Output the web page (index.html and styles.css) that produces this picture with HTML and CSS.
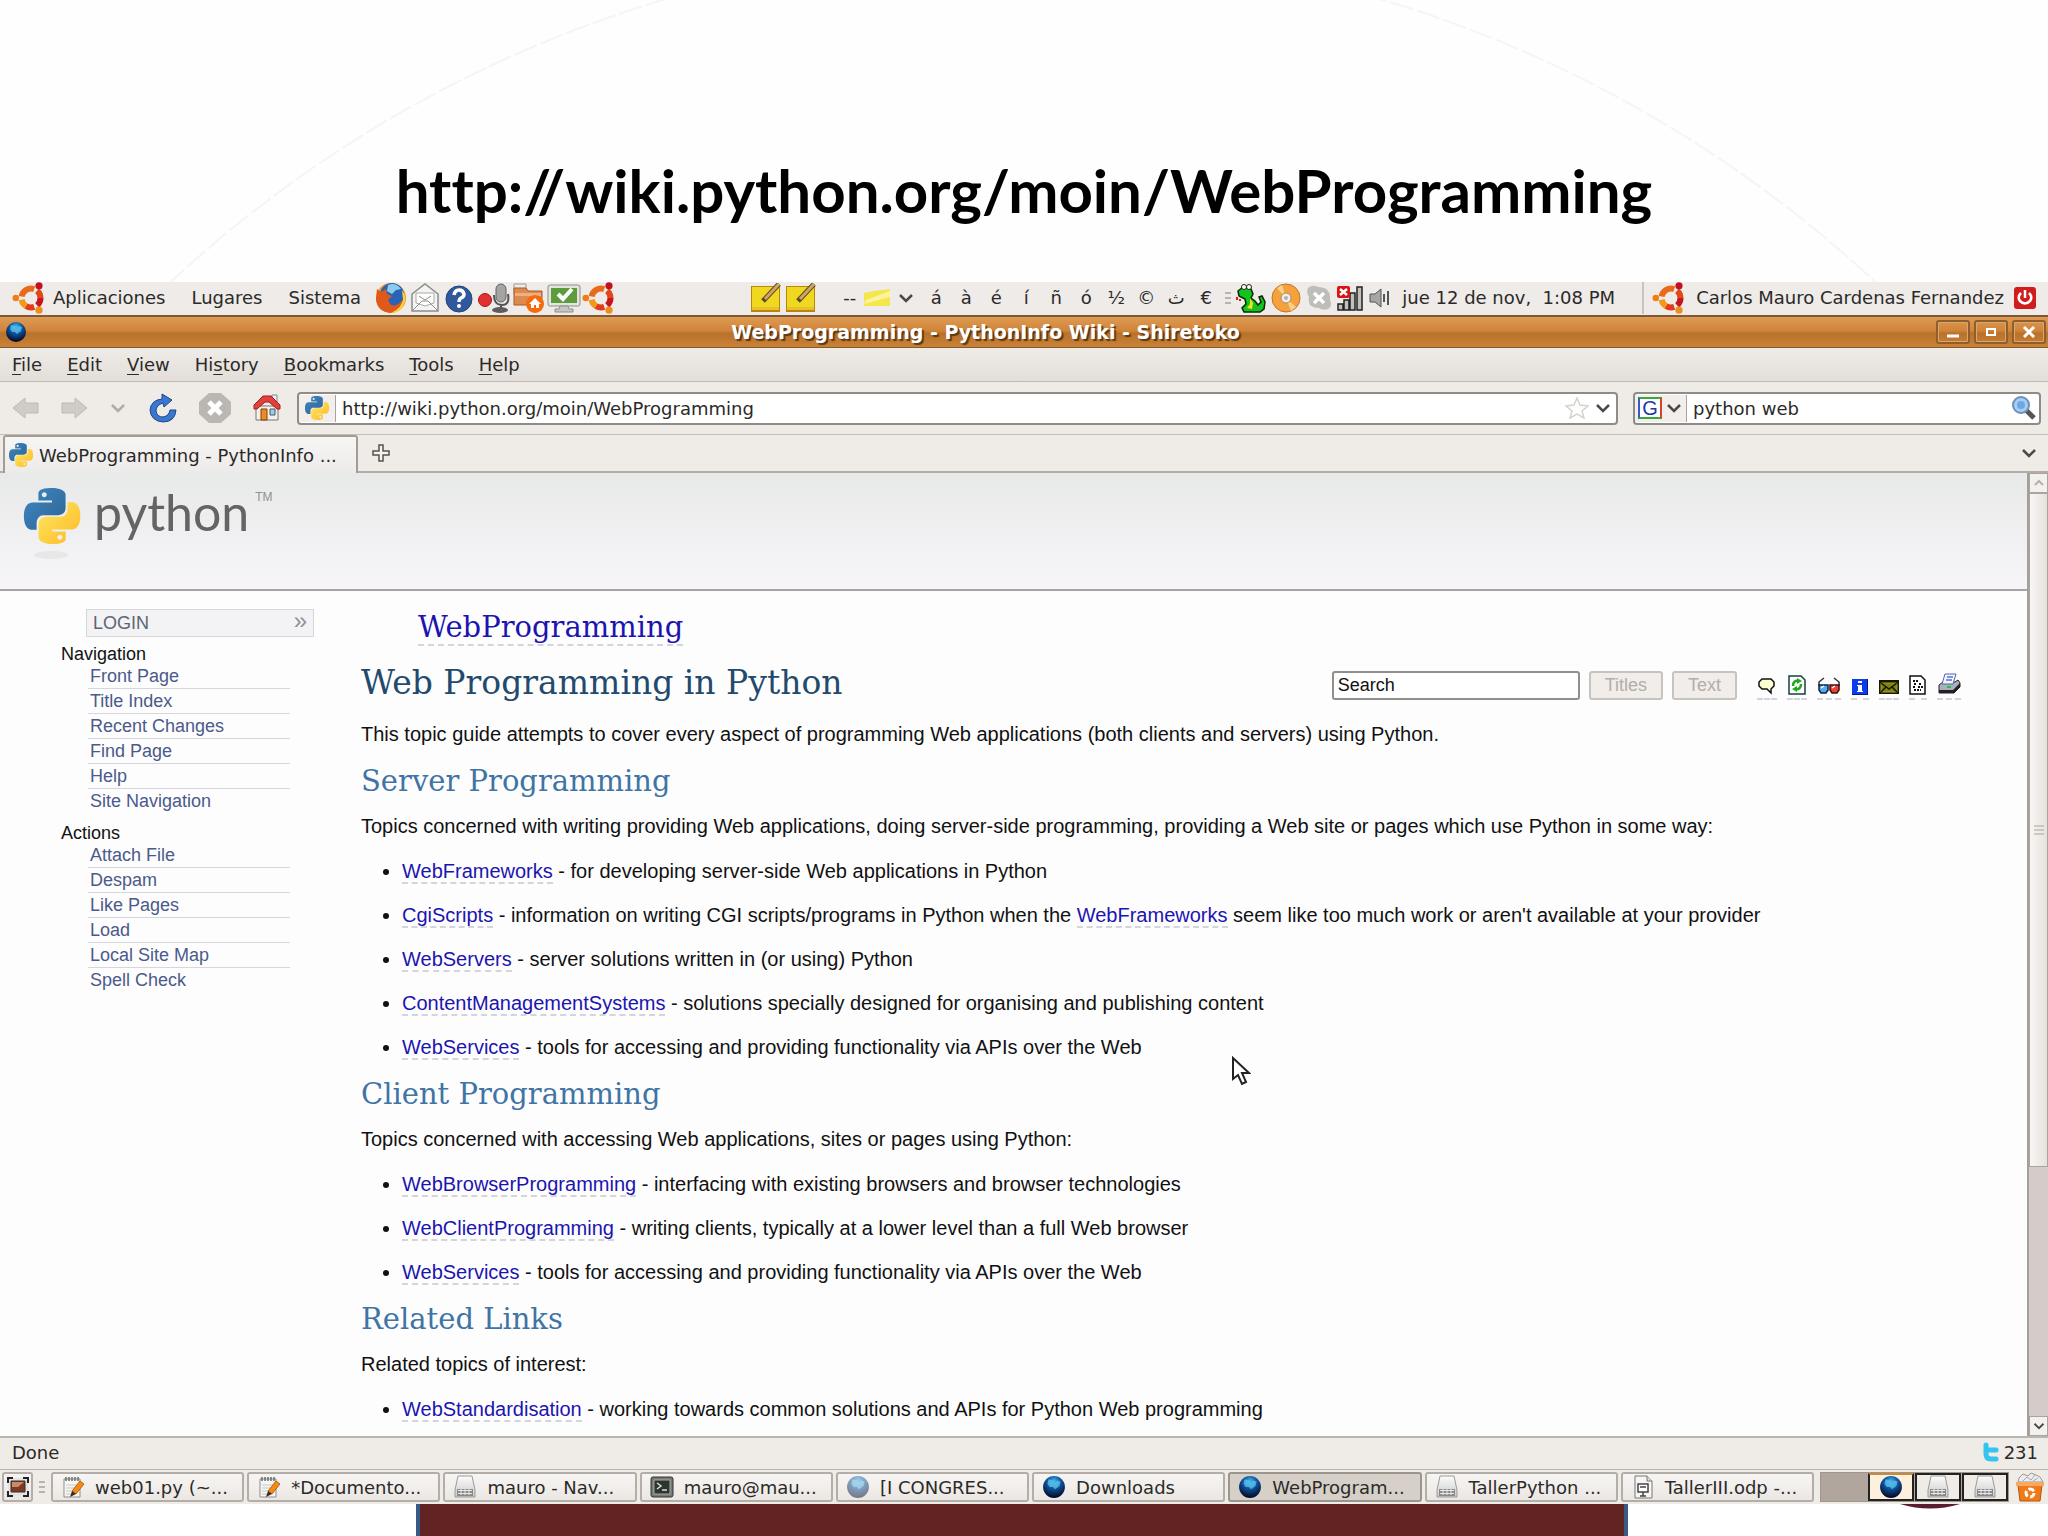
FILE: index.html
```html
<!DOCTYPE html>
<html lang="es">
<head>
    <meta charset="UTF-8">
    <meta name="viewport" content="width=device-width, initial-scale=1.0">
    <title>WebProgramming</title>
    <link rel="stylesheet" href="styles.css">
</head>
<body>
    <!-- shared icons -->
    <svg class="sprite" width="0" height="0" aria-hidden="true">
        <defs>
            <linearGradient id="py-blue" x1="0" y1="0" x2="1" y2="1"><stop offset="0" stop-color="#3e88c4"/><stop offset="1" stop-color="#2f6391"/></linearGradient>
            <linearGradient id="py-yellow" x1="0" y1="0" x2="1" y2="1"><stop offset="0" stop-color="#ffe95f"/><stop offset="1" stop-color="#fdb827"/></linearGradient>
            <radialGradient id="globe-fill" cx=".5" cy=".25" r=".75"><stop offset="0" stop-color="#4fc0ee"/><stop offset=".35" stop-color="#1260ac"/><stop offset="1" stop-color="#020624"/></radialGradient>
            <linearGradient id="drive-fill" x1="0" y1="0" x2="0" y2="1"><stop offset="0" stop-color="#fdfdfd"/><stop offset="1" stop-color="#c9c9c9"/></linearGradient>
            <symbol id="python" viewBox="0 0 24 24">
                <path fill="url(#py-blue)" d="M14.25.18l.9.2.73.26.59.3.45.32.34.34.25.34.16.33.1.3.04.26.02.2-.01.13V8.5l-.05.63-.13.55-.21.46-.26.38-.3.31-.33.25-.35.19-.35.14-.33.1-.3.07-.26.04-.21.02H8.77l-.69.05-.59.14-.5.22-.41.27-.33.32-.27.35-.2.36-.15.37-.1.35-.07.32-.04.27-.02.21v3.06H3.17l-.21-.03-.28-.07-.32-.12-.35-.18-.36-.26-.36-.36-.35-.46-.32-.59-.28-.73-.21-.88-.14-1.05-.05-1.23.06-1.22.16-1.04.24-.87.32-.71.36-.57.4-.44.42-.33.42-.24.4-.16.36-.1.32-.05.24-.01h.16l.06.01h8.16v-.83H6.18l-.01-2.75-.02-.37.05-.34.11-.31.17-.28.25-.26.31-.23.38-.2.44-.18.51-.15.58-.12.64-.1.71-.06.77-.04.84-.02 1.27.05zm-6.3 1.98l-.23.33-.08.41.08.41.23.34.33.22.41.09.41-.09.33-.22.23-.34.08-.41-.08-.41-.23-.33-.33-.22-.41-.09-.41.09z"/>
                <path fill="url(#py-yellow)" d="M21.1 6.11l.28.06.32.12.35.18.36.27.36.35.35.47.32.59.28.73.21.88.14 1.04.05 1.23-.06 1.23-.16 1.04-.24.86-.32.71-.36.57-.4.45-.42.33-.42.24-.4.16-.36.09-.32.05-.24.02-.16-.01h-8.22v.82h5.84l.01 2.76.02.36-.05.34-.11.31-.17.29-.25.25-.31.24-.38.2-.44.17-.51.15-.58.13-.64.09-.71.07-.77.04-.84.01-1.27-.04-1.07-.14-.9-.2-.73-.25-.59-.3-.45-.33-.34-.34-.25-.34-.16-.33-.1-.3-.04-.25-.02-.2.01-.13v-5.34l.05-.64.13-.54.21-.46.26-.38.3-.32.33-.24.35-.2.35-.14.33-.1.3-.06.26-.04.21-.02.13-.01h5.84l.69-.05.59-.14.5-.21.41-.28.33-.32.27-.35.2-.36.15-.36.1-.35.07-.32.04-.28.02-.21V6.07h2.09l.14.01zm-6.47 14.25l-.23.33-.08.41.08.41.23.33.33.23.41.08.41-.08.33-.23.23-.33.08-.41-.08-.41-.23-.33-.33-.23-.41-.08-.41.08z"/>
            </symbol>
            <symbol id="ubuntu" viewBox="0 0 34 32">
                <g fill="none" stroke-width="6">
                    <path stroke="#ea6a1c" d="M9.600 14.400A9.500 9.500 0 0 1 22.200 7.100"/>
                    <path stroke="#e0481c" d="M25.100 8.700A9.500 9.500 0 0 1 28.500 16"/>
                    <path stroke="#c8141c" d="M28.500 16A9.500 9.500 0 0 1 25.100 23.300"/>
                    <path stroke="#e03c1c" d="M22.200 24.900A9.500 9.500 0 0 1 14 24"/>
                    <path stroke="#f3981a" d="M14 24A9.500 9.500 0 0 1 9.600 17.600"/>
                </g>
                <circle cx="3.800" cy="16" r="3.300" fill="#ee7d1a"/>
                <circle cx="27" cy="3.800" r="3.600" fill="#c4101e"/>
                <circle cx="27" cy="28.200" r="3.600" fill="#f08c1c"/>
            </symbol>
            <symbol id="globe" viewBox="0 0 22 22">
                <circle cx="11" cy="11" r="10" fill="url(#globe-fill)"/>
                <path fill="#5cc4ee" opacity=".75" d="M6 4l4 1 1 3 3-3 3 1-1 4-4 3-2-2-3 0-2-3z"/>
            </symbol>
            <symbol id="chevron" viewBox="0 0 16 16"><path fill="none" stroke="#4c4a46" stroke-width="2.500" d="M2 5l6 6 6-6"/></symbol>
            <symbol id="drive" viewBox="0 0 24 24">
                <path fill="url(#drive-fill)" stroke="#9b9b9b" d="M5 1h14l3 14v7H2v-7z"/>
                <path fill="#8a8a8a" d="M4 14h16v7H4z"/>
                <path stroke="#e8e8e8" d="M5 15.500h14M5 18.500h14M8 14v6M12 14v6M16 14v6"/>
            </symbol>
            <symbol id="notepad" viewBox="0 0 24 24">
                <path fill="#f6f6f4" stroke="#8d8d88" d="M3 4h16v18H3z"/>
                <path stroke="#6d6d68" stroke-width="1.500" d="M5 2v4M8 2v4M11 2v4M14 2v4M17 2v4"/>
                <path stroke="#c6c6c2" d="M5 10h11M5 13h9M5 16h6M5 19h5"/>
                <path fill="#f58a12" stroke="#a85206" stroke-width=".8" d="M19 6l4 3-8 10-4-3z"/>
                <path fill="#3c2a1a" d="M11 16l4 3-6 3z"/>
            </symbol>
            <symbol id="sticky" viewBox="0 0 31 30">
                <path fill="#b8860b" d="M1 3h29v26H1z"/>
                <path fill="#f0d820" d="M2 4h27v20H2z"/>
                <path fill="#e8c02c" d="M2 24h27v3H2z"/>
                <path fill="none" stroke="#5a4a20" stroke-width="5" d="M13 18L29 1"/>
                <path fill="none" stroke="#d0a468" stroke-width="3" d="M15 16L29 1"/>
            </symbol>
        </defs>
    </svg>

    <header class="slide-header">
        <svg class="slide-arc" viewBox="0 0 2048 282" aria-hidden="true">
            <circle cx="1023" cy="1199" r="1252" fill="none" stroke="#f6f4f4" stroke-width="2" stroke-dasharray="24 4"/>
        </svg>
        <h1>http://wiki.python.org/moin/WebProgramming</h1>
    </header>

    <div class="desktop">
        <div class="panel">
            <div class="panel-menu">
                <button type="button"><svg width="34" height="32"><use href="#ubuntu"/></svg>Aplicaciones</button>
                <button type="button">Lugares</button>
                <button type="button">Sistema</button>
            </div>
            <div class="launchers">
                <svg width="34" height="32" viewBox="0 0 34 32">
                    <circle cx="17" cy="16" r="15" fill="#f39a1c"/>
                    <circle cx="18" cy="13" r="12" fill="#2a63b4"/>
                    <path fill="#8ccbf0" d="M14 3q8-3 13 4l-5 1-4 4-5-3z"/>
                    <path fill="#e0581a" d="M3 7l4 3 5-3 1 5 5 2-4 4 3 5q7 2 11-5-2 12-11 13Q3 30 2 17z"/>
                    <path fill="#fbd33c" d="M28 8q6 8 1 16-4 7-12 7 11-5 12-13z"/>
                </svg>
                <svg width="32" height="32" viewBox="0 0 30 32">
                    <path fill="#f4f4f3" stroke="#8c8c8a" stroke-width="1.500" d="M2 12L15 2l13 10v17H2z"/>
                    <path fill="#fff" stroke="#a8a8a6" d="M6 11h18v10l-9 3-9-3z"/>
                    <path fill="none" stroke="#8c8c8a" d="M3 28l9-9h6l9 9M9 14l6 4 6-4"/>
                </svg>
                <svg width="34" height="32" viewBox="0 0 34 32">
                    <circle cx="17" cy="17" r="13" fill="#30589c" stroke="#24427c"/>
                    <path fill="none" stroke="#fff" stroke-width="3.500" d="M12 13q1-5 5-5t5 4q0 3-3 4-2 1-2 4"/>
                    <circle cx="17" cy="24" r="2" fill="#fff"/>
                </svg>
                <svg width="34" height="32" viewBox="0 0 34 32">
                    <circle cx="8" cy="18" r="6.500" fill="#e03030" stroke="#a81818"/>
                    <rect x="19" y="2" width="10" height="18" rx="5" fill="#a4a4a4" stroke="#636363"/>
                    <path fill="none" stroke="#555" stroke-width="2" d="M17 13q0 10 8 10t6-11M24 22v6"/>
                    <ellipse cx="23" cy="28" rx="8" ry="3" fill="#5d5d5d"/>
                </svg>
                <svg width="34" height="32" viewBox="0 0 34 32">
                    <path fill="#ececea" stroke="#999" d="M2 2h12v10H2z"/>
                    <path fill="#dd8a50" stroke="#a85a28" d="M2 6h12l2 3h14v14H2z"/>
                    <path fill="#eeb080" d="M3 11h26v3H3z"/>
                    <circle cx="23" cy="22" r="9" fill="#f56a0c"/>
                    <path fill="#fff" d="M23 16l6 6h-2v4h-3v-3h-2v3h-3v-4h-2z"/>
                </svg>
                <svg width="34" height="32" viewBox="0 0 34 32">
                    <rect x="1" y="3" width="32" height="21" rx="2" fill="#e4e4e0" stroke="#8f8f8a"/>
                    <path fill="#5c9c3c" d="M4 6h26v15H4z"/>
                    <path fill="none" stroke="#fff" stroke-width="4" d="M11 12l5 5 9-10"/>
                    <path fill="#c6c6c2" stroke="#8f8f8a" d="M13 24h8l1 3h4v3H8v-3h4z"/>
                </svg>
                <svg width="34" height="32"><use href="#ubuntu"/></svg>
            </div>

            <div class="applets">
                <svg width="31" height="30"><use href="#sticky"/></svg>
                <svg width="31" height="30"><use href="#sticky"/></svg>
            </div>
            <div class="charmap">
                <span>--</span>
                <svg width="28" height="20" viewBox="0 0 28 20"><path fill="#f5e64a" d="M1 5l10-2L27 1v17H1z"/><path fill="#fbf3a0" d="M3 12L27 3v6L1 16z"/></svg>
                <svg width="16" height="16"><use href="#chevron"/></svg>
                <div class="chars">
                    <button type="button">á</button><button type="button">à</button><button type="button">é</button><button type="button">í</button><button type="button">ñ</button><button type="button">ó</button><button type="button">½</button><button type="button">©</button><button type="button">ث</button><button type="button">€</button>
                </div>
            </div>
            <div class="tray">
                <svg width="6" height="14" viewBox="0 0 6 14"><path stroke="#b9b3aa" stroke-width="2" d="M0 2h6M0 7h6M0 12h6"/></svg>
                <svg width="30" height="30" viewBox="0 0 30 30">
                    <path fill="#12c41c" stroke="#042c08" stroke-width="1.500" d="M2 8l5-4 8 2 2 5-2 4 4 3 3 4 3-3-2-5 3-1 3 6-1 7-4 3H8l-2-4 4-4-1-5-6-3z"/>
                    <path fill="#f4e21c" d="M14 15l3 5-1 6-5-1 3-4z"/>
                    <circle cx="8" cy="4" r="2.500" fill="#fff" stroke="#222"/><circle cx="13" cy="4" r="2.500" fill="#fff" stroke="#222"/>
                    <path stroke="#e01818" stroke-width="2" d="M1 14v3M4 16v2"/>
                </svg>
                <svg width="30" height="30" viewBox="0 0 30 30">
                    <circle cx="15" cy="15" r="14" fill="#f5a13c" stroke="#c0742c"/>
                    <path fill="#fbd08c" d="M15 15L6 5l5-3zM15 15l10 9-5 4z"/>
                    <circle cx="15" cy="15" r="5" fill="#eee" stroke="#b0885c"/><circle cx="15" cy="15" r="2" fill="#b8b0a4"/>
                </svg>
                <svg width="26" height="26" viewBox="0 0 26 26">
                    <path fill="#bdbdb9" d="M2 3q5-4 10-1 13 0 12 13 3 6-2 9-5 2-9-1Q1 23 3 12 0 7 2 3z"/>
                    <path stroke="#fff" stroke-width="3.500" d="M8 8l10 10M18 8L8 18"/>
                </svg>
                <svg width="26" height="28" viewBox="0 0 26 28">
                    <path fill="#c0c0bc" stroke="#222" stroke-width="1.500" d="M1 20h5v6H1zM7 16h5v10H7zM13 9h5v17h-5zM20 3h5v23h-5z"/>
                    <rect x="0" y="2" width="13" height="12" rx="2" fill="#d81414"/>
                    <path stroke="#fff" stroke-width="2.500" d="M3 5l7 6M10 5l-7 6"/>
                </svg>
                <svg width="24" height="22" viewBox="0 0 24 22">
                    <path fill="#a6a6a4" stroke="#555" d="M2 7h5l6-5v18l-6-5H2z"/>
                    <path fill="none" stroke="#555" stroke-width="2" d="M16 7v8M20 4v14"/>
                </svg>
            </div>
            <time class="clock">jue 12 de nov,&nbsp; 1:08 PM</time>
            <div class="user">
                <svg width="34" height="32"><use href="#ubuntu"/></svg>
                <span>Carlos Mauro Cardenas Fernandez</span>
                <svg width="22" height="22" viewBox="0 0 22 22">
                    <rect width="22" height="22" rx="3" fill="#d01c1c"/>
                    <path fill="none" stroke="#fff" stroke-width="2.500" d="M7 6q-4 4-1 8 5 5 10 0 3-4-1-8M11 3v8"/>
                </svg>
            </div>
        </div>

        <div class="titlebar">
            <svg width="22" height="22"><use href="#globe"/></svg>
            <span class="window-title">WebProgramming - PythonInfo Wiki - Shiretoko</span>
            <div class="window-buttons">
                <button type="button" aria-label="Minimize"><svg width="18" height="16" viewBox="0 0 18 16"><path stroke="#fff" stroke-width="3" d="M3 12h12"/></svg></button>
                <button type="button" aria-label="Maximize"><svg width="18" height="16" viewBox="0 0 18 16"><path fill="none" stroke="#fff" stroke-width="2" d="M5 5h8v6H5z"/></svg></button>
                <button type="button" aria-label="Close"><svg width="18" height="16" viewBox="0 0 18 16"><path stroke="#fff" stroke-width="3" d="M4 3l10 10M14 3L4 13"/></svg></button>
            </div>
        </div>

        <nav class="menubar">
            <button type="button"><u>F</u>ile</button>
            <button type="button"><u>E</u>dit</button>
            <button type="button"><u>V</u>iew</button>
            <button type="button">Hi<u>s</u>tory</button>
            <button type="button"><u>B</u>ookmarks</button>
            <button type="button"><u>T</u>ools</button>
            <button type="button"><u>H</u>elp</button>
        </nav>

        <div class="toolbar">
            <div class="nav-buttons">
                <button type="button" aria-label="Back" disabled><svg width="28" height="24" viewBox="0 0 28 24"><path fill="#cfcbc6" stroke="#bfbab4" d="M1 12L13 2v5h13v10H13v5z"/></svg></button>
                <button type="button" aria-label="Forward" disabled><svg width="28" height="24" viewBox="0 0 28 24"><path fill="#cfcbc6" stroke="#bfbab4" d="M27 12L15 2v5H2v10h13v5z"/></svg></button>
                <button type="button" class="history" aria-label="Recent pages" disabled><svg width="16" height="16" viewBox="0 0 16 16"><path fill="none" stroke="#b0aca6" stroke-width="2.500" d="M2 5l6 6 6-6"/></svg></button>
                <button type="button" aria-label="Reload"><svg width="30" height="30" viewBox="0 0 30 30"><path fill="#3a78d0" stroke="#1c4688" d="M14 1l10 6-8 7-1-4q-7 2-7 8 1 6 7 6 6-1 7-7h6q-1 12-13 12Q3 28 2 17 3 7 14 6z"/></svg></button>
                <button type="button" aria-label="Stop" disabled><svg width="34" height="32" viewBox="0 0 34 32"><path fill="#bab7b3" d="M11 1h12l10 9v12l-10 9H11L1 22V10z"/><path stroke="#fff" stroke-width="5" d="M11 10l12 12M23 10L11 22"/></svg></button>
                <button type="button" aria-label="Home"><svg width="30" height="28" viewBox="0 0 30 28"><path fill="#f4f0ea" stroke="#777" d="M4 12h22v14H4z"/><path fill="#eee" stroke="#888" d="M20 1h5v8h-5z"/><path fill="#e2403c" stroke="#a01c1c" d="M11 2h8l9 9v4h-3l-8-7h-4l-8 7H2v-4z"/><path fill="#ee8a24" stroke="#804008" d="M9 15h6v11H9z"/><path fill="#8cd4f0" stroke="#555" d="M18 15h5v6h-5z"/></svg></button>
            </div>
            <div class="urlbar">
                <span class="site-icon"><svg width="24" height="24"><use href="#python"/></svg></span>
                <input type="text" aria-label="Location" value="http://wiki.python.org/moin/WebProgramming">
                <svg width="24" height="22" viewBox="0 0 24 22"><path fill="#fff" stroke="#d6d3cf" stroke-width="1.500" d="M12 1l3 7 8 1-6 5 2 7-7-4-7 4 2-7-6-5 8-1z"/></svg>
                <svg width="16" height="16"><use href="#chevron"/></svg>
            </div>
            <div class="searchbar">
                <button type="button" class="engine" aria-label="Search engine">
                    <span class="engine-logo">G</span>
                    <svg width="16" height="16"><use href="#chevron"/></svg>
                </button>
                <input type="text" aria-label="Web search" value="python web">
                <svg width="24" height="24" viewBox="0 0 24 24"><path stroke="#555" stroke-width="5" d="M14 14l8 8"/><circle cx="9" cy="9" r="8" fill="#a9cdf2" stroke="#6d8fb8" stroke-width="2"/><circle cx="9" cy="9" r="4" fill="#6ea6e6"/></svg>
            </div>
        </div>

        <div class="tabbar">
            <div class="tab"><svg width="24" height="24"><use href="#python"/></svg>WebProgramming - PythonInfo ...</div>
            <button type="button" aria-label="New tab"><svg width="18" height="18" viewBox="0 0 18 18"><path fill="#f6f4f1" stroke="#55524e" stroke-width="1.500" d="M7 1h4v6h6v4h-6v6H7v-6H1V7h6z"/></svg></button>
            <button type="button" class="all-tabs" aria-label="All tabs"><svg width="16" height="16"><use href="#chevron"/></svg></button>
        </div>

        <div class="viewport">
            <div class="page">
                <div class="site-header">
                    <svg width="58" height="80" viewBox="0 0 58 80">
                        <ellipse cx="28" cy="67" rx="17" ry="4" fill="#e2e2e3" opacity=".7"/>
                        <use href="#python" width="58" height="56"/>
                    </svg>
                    <span class="site-name">python</span><span class="tm">TM</span>
                </div>
                <div class="page-body">
                    <aside class="sidebar">
                        <a class="login" href="#">LOGIN <span>»</span></a>
                        <h4>Navigation</h4>
                        <ul>
                            <li><a href="#">Front Page</a></li>
                            <li><a href="#">Title Index</a></li>
                            <li><a href="#">Recent Changes</a></li>
                            <li><a href="#">Find Page</a></li>
                            <li><a href="#">Help</a></li>
                            <li><a href="#">Site Navigation</a></li>
                        </ul>
                        <h4>Actions</h4>
                        <ul>
                            <li><a href="#">Attach File</a></li>
                            <li><a href="#">Despam</a></li>
                            <li><a href="#">Like Pages</a></li>
                            <li><a href="#">Load</a></li>
                            <li><a href="#">Local Site Map</a></li>
                            <li><a href="#">Spell Check</a></li>
                        </ul>
                    </aside>

                    <main class="content">
                        <div class="page-title"><a href="#">WebProgramming</a></div>
                        <div class="heading-row">
                            <h2>Web Programming in Python</h2>
                            <form class="wiki-search">
                                <input type="text" aria-label="Search" value="Search">
                                <button type="submit" disabled>Titles</button>
                                <button type="submit" disabled>Text</button>
                            </form>
                            <div class="page-icons">
                                <a href="#" aria-label="Discussion"><svg width="20" height="20" viewBox="0 0 20 20"><path fill="#fdfdd0" stroke="#111" stroke-width="1.500" d="M5 4h9l3 3v4l-3 3v4l-4-4H5l-3-3V7z"/></svg></a>
                                <a href="#" aria-label="Refresh"><svg width="20" height="20" viewBox="0 0 20 20"><path fill="#fff" stroke="#134040" stroke-width="1.500" d="M2 1h12l4 4v14H2z"/><path fill="none" stroke="#1fa81f" stroke-width="2.500" d="M6 11q0-6 6-5M14 9q0 6-6 5"/><path fill="#1fa81f" d="M10 3l5 3-5 3zM10 11v6l-5-3z"/></svg></a>
                                <a href="#" aria-label="Diffs"><svg width="24" height="20" viewBox="0 0 24 20"><path fill="none" stroke="#333" stroke-width="1.500" d="M2 11V7l5-4M22 11V7l-5-4"/><path fill="#58a8f8" stroke="#123" stroke-width="1.500" d="M2 10h9v5l-2 3H4l-2-3z"/><path fill="#f04038" stroke="#311" stroke-width="1.500" d="M13 10h9v5l-2 3h-5l-2-3z"/><path stroke="#fff" stroke-width="1.500" d="M4 13l3-2M15 13l3-2"/></svg></a>
                                <a href="#" aria-label="Info"><svg width="18" height="20" viewBox="0 0 18 20"><path fill="#0c3cf0" d="M1 4h15v15H1z"/><path fill="#001a80" d="M16 4h1v16H1v-1h15z"/><path fill="#fff" d="M7 6h4v2H7zM6 10h5v6h1v1H6v-1h1v-5H6z"/></svg></a>
                                <a href="#" aria-label="Subscribe"><svg width="20" height="20" viewBox="0 0 20 20"><path fill="#181800" d="M0 5h20v14H0z"/><path fill="#7d8410" stroke="#a0a030" d="M2 8h16v9H2z"/><path fill="none" stroke="#181800" stroke-width="1.500" d="M2 8l8 6 8-6M2 17l5-5M18 17l-5-5"/></svg></a>
                                <a href="#" aria-label="Raw text"><svg width="18" height="20" viewBox="0 0 18 20"><path fill="#fff" stroke="#111" stroke-width="1.500" d="M1 1h11l4 4v14H1z"/><path stroke="#111" stroke-width="2" stroke-dasharray="2 1" d="M4 6h5M5 9h3M10 9h3M4 12h2M9 12h5M5 15h7"/></svg></a>
                                <a href="#" aria-label="Print"><svg width="24" height="22" viewBox="0 0 24 22"><path fill="#aab0bc" stroke="#222" d="M2 12l4-3h12l3-2 2 3v4l-6 6H2z"/><path fill="#f4f6ff" stroke="#5060a8" d="M8 1h11l-3 10H5z"/><path stroke="#5070e0" stroke-width="1.500" d="M10 4h6M9 7h6"/><path fill="#222" d="M2 17h14l7-7v4l-6 6H2z"/><path fill="#26c43c" d="M10 13h4v2h-4z"/></svg></a>
                            </div>
                        </div>
                        <p>This topic guide attempts to cover every aspect of programming Web applications (both clients and servers) using Python.</p>

                        <h3>Server Programming</h3>
                        <p>Topics concerned with writing providing Web applications, doing server-side programming, providing a Web site or pages which use Python in some way:</p>
                        <ul>
                            <li><a href="#">WebFrameworks</a> - for developing server-side Web applications in Python</li>
                            <li><a href="#">CgiScripts</a> - information on writing CGI scripts/programs in Python when the <a href="#">WebFrameworks</a> seem like too much work or aren't available at your provider</li>
                            <li><a href="#">WebServers</a> - server solutions written in (or using) Python</li>
                            <li><a href="#">ContentManagementSystems</a> - solutions specially designed for organising and publishing content</li>
                            <li><a href="#">WebServices</a> - tools for accessing and providing functionality via APIs over the Web</li>
                        </ul>

                        <h3>Client Programming</h3>
                        <p>Topics concerned with accessing Web applications, sites or pages using Python:</p>
                        <ul>
                            <li><a href="#">WebBrowserProgramming</a> - interfacing with existing browsers and browser technologies</li>
                            <li><a href="#">WebClientProgramming</a> - writing clients, typically at a lower level than a full Web browser</li>
                            <li><a href="#">WebServices</a> - tools for accessing and providing functionality via APIs over the Web</li>
                        </ul>

                        <h3>Related Links</h3>
                        <p>Related topics of interest:</p>
                        <ul>
                            <li><a href="#">WebStandardisation</a> - working towards common solutions and APIs for Python Web programming</li>
                        </ul>
                    </main>
                </div>
            </div>
            <div class="scrollbar">
                <span class="scroll-arrow"><svg width="10" height="8" viewBox="0 0 10 8"><path fill="none" stroke="#b5b0aa" stroke-width="2" d="M1 6l4-4 4 4"/></svg></span>
                <span class="scroll-thumb"><svg width="10" height="11" viewBox="0 0 10 11"><path stroke="#a9a39b" d="M0 1h10M0 5h10M0 9h10"/></svg></span>
                <span class="scroll-arrow scroll-end"><svg width="12" height="12"><use href="#chevron"/></svg></span>
            </div>
            <svg class="pointer" width="20" height="30" viewBox="0 0 20 30"><path fill="#fff" stroke="#222" stroke-width="2" d="M2 2v21l5-4 4 9 4-2-4-9h7z"/></svg>
        </div>

        <div class="statusbar">
            <span>Done</span>
            <span class="tweets"><svg width="18" height="20" viewBox="0 0 18 20"><path fill="none" stroke="#35c3f0" stroke-width="5" stroke-linecap="round" d="M4 3v9q0 5 5 5h5M4 8h10"/></svg>231</span>
        </div>

        <div class="taskbar">
            <button type="button" class="show-desktop" aria-label="Show desktop"><svg width="22" height="20" viewBox="0 0 22 20"><path fill="#e6e4e2" d="M1 1h20v18H1z"/><path fill="none" stroke="#222" stroke-width="2" d="M1 6V1h5M16 1h5v5M21 14v5h-5M6 19H1v-5"/><path fill="#7d3a20" stroke="#333" d="M4 4h14v11H4z"/><path fill="#c88c68" d="M5 5h12l-6 5H5z"/></svg></button>
            <svg width="6" height="14" viewBox="0 0 6 14"><path stroke="#b9b3aa" stroke-width="2" d="M0 2h6M0 7h6M0 12h6"/></svg>
            <div class="tasks">
                <button type="button"><svg width="24" height="24"><use href="#notepad"/></svg>web01.py (~...</button>
                <button type="button"><svg width="24" height="24"><use href="#notepad"/></svg>*Documento...</button>
                <button type="button"><svg width="24" height="24"><use href="#drive"/></svg>mauro - Nav...</button>
                <button type="button"><svg width="24" height="24" viewBox="0 0 24 24"><rect x="1" y="2" width="22" height="20" rx="2" fill="#777a74" stroke="#333"/><path fill="#2c352e" stroke="#aaa" d="M4 5h16v14H4z"/><path fill="none" stroke="#d8e0d8" stroke-width="1.500" d="M7 8l4 3-4 3M12 15h5"/></svg>mauro@mau...</button>
                <button type="button" class="minimized"><svg width="24" height="24"><use href="#globe"/></svg>[I CONGRES...</button>
                <button type="button"><svg width="24" height="24"><use href="#globe"/></svg>Downloads</button>
                <button type="button" class="active"><svg width="24" height="24"><use href="#globe"/></svg>WebProgram...</button>
                <button type="button"><svg width="24" height="24"><use href="#drive"/></svg>TallerPython ...</button>
                <button type="button"><svg width="24" height="24" viewBox="0 0 24 24"><path fill="#f5f5f3" stroke="#777" d="M4 1h12l5 5v17H4z"/><path fill="#ddd" stroke="#777" d="M16 1v5h5"/><path fill="#fff" stroke="#444" stroke-width="1.500" d="M7 9h10v8H7zM12 17v4M9 21h6M9 12h6"/></svg>TallerIII.odp -...</button>
            </div>
            <div class="pager">
                <span class="empty"></span>
                <span class="current"><svg width="24" height="24"><use href="#globe"/></svg></span>
                <span><svg width="24" height="24"><use href="#drive"/></svg></span>
                <span><svg width="24" height="24"><use href="#drive"/></svg></span>
            </div>
            <svg width="30" height="30" viewBox="0 0 30 30"><path fill="#ececec" stroke="#999" d="M3 10l1-4 4-4 5 2 3-3 5 2 4 2 3 5z"/><path fill="none" stroke="#aaa" d="M8 9l4-4 4 3 4-5M18 9l5-3"/><path fill="#f07a18" stroke="#b8540c" d="M3 13h24l-2 16H5z"/><path fill="#f9a860" d="M1 10h28v4H1z"/><circle cx="15" cy="21" r="4" fill="none" stroke="#fff" stroke-width="3" stroke-dasharray="6 2.400"/></svg>
        </div>
    </div>

    <footer class="slide-footer">
        <div class="slide-band"></div>
        <svg class="slide-mark" width="60" height="5" viewBox="0 0 60 5"><path fill="#5c1c30" d="M0 0q30 9 60 0z"/></svg>
    </footer>
</body>
</html>
```

FILE: styles.css
```css
* {
    box-sizing: border-box;
}
body {
    font-family: "DejaVu Sans", sans-serif;
    font-size: 18px;
    color: #2b2a28;
    background-color: #fff;
    display: flex;
    flex-direction: column;
    min-height: 100vh;
    margin: 0;
}
button,
input {
    font: inherit;
    color: inherit;
}
button {
    background: none;
    border: none;
    padding: 0;
}
svg {
    display: block;
    flex-shrink: 0;
}
ul {
    margin: 0;
    padding: 0;
}
.sprite {
    position: absolute;
}

/* slide */
.slide-header {
    position: relative;
    height: 282px;
    padding-top: 150px;
    background-color: #fefefe;
}
.slide-arc {
    position: absolute;
    top: 0;
    left: 0;
    width: 100%;
}
.slide-header h1 {
    position: relative;
    margin: 0;
    font-family: Lato, "Open Sans", sans-serif;
    font-size: 60px;
    font-variant-ligatures: none;
    line-height: 80px;
    text-align: center;
    color: #000;
}
.slide-footer {
    display: flex;
    justify-content: space-between;
    height: 32px;
    padding: 0 88px 0 416px;
}
.slide-band {
    width: 1212px;
    background-color: #622423;
    border: solid #3a5a86;
    border-width: 0 4px;
}
.desktop {
    flex: 1;
    display: flex;
    flex-direction: column;
    background-color: #efebe7;
}

/* top panel */
.panel {
    display: flex;
    align-items: center;
    height: 33px;
    padding: 0 12px 2px;
    background-color: #eeebe8;
}
.panel-menu {
    display: flex;
    gap: 26px;
}
.panel-menu button {
    display: flex;
    align-items: center;
    gap: 7px;
}
.launchers {
    display: flex;
    gap: 1px;
    margin-left: 13px;
}
.applets {
    display: flex;
    gap: 4px;
    margin-left: auto;
}
.charmap {
    display: flex;
    align-items: center;
    gap: 7px;
    margin-left: 27px;
}
.chars {
    display: flex;
}
.chars button {
    width: 30px;
}
.tray {
    display: flex;
    align-items: center;
    gap: 5px;
    margin-left: 4px;
}
.clock {
    margin: 0 27px 0 10px;
}
.user {
    display: flex;
    align-items: center;
    gap: 10px;
    padding-left: 8px;
    border-left: 2px solid #c9c4be;
}

/* browser window */
.titlebar {
    display: flex;
    align-items: center;
    height: 33px;
    padding: 0 2px 0 5px;
    background: linear-gradient(#e09a52, #cf853a 45%, #b9722a 55%, #c98236);
    border-top: 2px solid #7a5a38;
    border-bottom: 1px solid #85592a;
}
.window-title {
    flex: 1;
    padding-left: 8px;
    font-size: 19px;
    line-height: 28px;
    text-align: center;
    font-weight: bold;
    color: #fff;
    text-shadow: 2px 2px 1px #5a3a18;
}
.window-buttons {
    display: flex;
    gap: 4px;
}
.window-buttons button {
    display: flex;
    align-items: center;
    justify-content: center;
    width: 34px;
    height: 24px;
    border: 2px solid #8e5e2c;
    border-radius: 3px;
    box-shadow: inset 0 0 0 1px #dba66c;
}
.menubar {
    display: flex;
    gap: 25px;
    height: 34px;
    padding: 0 12px;
    background: linear-gradient(#efebe7, #e3ded9);
    border-bottom: 1px solid #bfbab4;
}
.menubar u {
    text-underline-offset: 3px;
}
.toolbar {
    display: flex;
    align-items: center;
    gap: 15px;
    height: 53px;
    padding: 0 7px 0 12px;
    border-bottom: 1px solid #c4beb8;
}
.nav-buttons {
    display: flex;
    align-items: center;
    gap: 20px;
    width: 270px;
}
.urlbar,
.searchbar {
    display: flex;
    align-items: center;
    gap: 6px;
    height: 33px;
    background-color: #fff;
    border: 2px solid #8f8b86;
    border-radius: 4px;
}
.urlbar {
    flex: 1;
    padding-right: 5px;
}
.searchbar {
    width: 408px;
    padding-right: 3px;
}
.urlbar input,
.searchbar input {
    flex: 1;
    min-width: 0;
    padding: 0;
    border: none;
    background: none;
}
.history {
    margin: 0 2px;
}
.site-icon,
.engine {
    display: flex;
    align-items: center;
    height: 27px;
    padding: 0 6px;
    background-color: #f1eeeb;
    border-right: 1px solid #a8a39d;
}
.engine {
    gap: 4px;
    padding: 0 4px 0 3px;
}
.engine-logo {
    width: 24px;
    height: 22px;
    font-family: "Liberation Sans", sans-serif;
    font-size: 20px;
    line-height: 18px;
    color: #2038a8;
    background-color: #fff;
    border: 2px solid;
    border-color: #38a838 #d84030 #38a838 #3858c8;
}
.tabbar {
    display: flex;
    align-items: center;
    gap: 14px;
    height: 38px;
    padding: 0 11px 0 3px;
    border-bottom: 2px solid #b5aca7;
}
.tab {
    display: flex;
    align-items: center;
    gap: 6px;
    width: 355px;
    height: 38px;
    padding-left: 4px;
    margin-bottom: -2px;
    white-space: nowrap;
    background: linear-gradient(#f8f6f4, #ecebea);
    border: 2px solid #a39c95;
    border-bottom: none;
    border-radius: 3px 3px 0 0;
}
.all-tabs {
    margin-left: auto;
}

/* page */
.viewport {
    position: relative;
    flex: 1;
    display: flex;
    background-color: #fdfdfe;
}
.page {
    flex: 1;
    color: #111;
    font-family: "Liberation Sans", Arial, sans-serif;
    font-size: 20px;
    line-height: 24px;
}
.site-header {
    display: flex;
    align-items: flex-start;
    height: 118px;
    padding: 15px 23px;
    background: linear-gradient(#e8e9e9, #f7f5f8);
    border-bottom: 2px solid #a5a5a8;
}
.site-name {
    margin-left: 13px;
    font-family: Lato, sans-serif;
    font-size: 50px;
    line-height: 48px;
    color: #646466;
}
.tm {
    margin-left: 6px;
    font-size: 12px;
    line-height: 18px;
    color: #909092;
}
.page-body {
    display: flex;
    gap: 47px;
    padding: 18px 66px 8px 61px;
}
.sidebar {
    width: 253px;
    font-size: 18px;
}
.login {
    display: flex;
    justify-content: space-between;
    height: 28px;
    margin-left: 25px;
    padding: 0 6px;
    line-height: 26px;
    color: #5c6670;
    text-decoration: none;
    background-color: #f3f3f6;
    border: 1px solid #d5d5da;
}
.login span {
    font-size: 24px;
    line-height: 22px;
    color: #909098;
}
.sidebar h4 {
    margin: 7px 0 0;
    font-size: 18px;
    font-weight: normal;
    line-height: 20px;
}
.sidebar ul {
    margin: 0 24px 9px 27px;
    list-style: none;
}
.sidebar li {
    border-bottom: 1px solid #d6d6de;
}
.sidebar li:last-child {
    border-bottom-color: transparent;
}
.sidebar li a {
    padding-left: 2px;
    color: #4b5a8a;
    text-decoration: none;
}
.content {
    flex: 1;
}
.content a {
    color: #1c14b0;
    text-decoration: none;
    border-bottom: 2px dashed #d4d4dc;
}
.content h2,
.content h3,
.page-title {
    font-family: "DejaVu Serif", serif;
    font-weight: normal;
}
.page-title {
    padding-left: 57px;
    font-size: 29px;
    line-height: 36px;
}
.heading-row {
    display: flex;
    align-items: center;
    margin: 18px 0 15px;
}
.content h2 {
    flex: 1;
    margin: 0;
    padding-bottom: 4px;
    font-size: 33px;
    line-height: 40px;
    color: #234a6c;
}
.content h3 {
    margin: 17px 0 15px;
    font-size: 29px;
    line-height: 36px;
    color: #3f74a4;
}
.content p {
    margin: 0;
}
.content ul {
    display: flex;
    flex-direction: column;
    gap: 20px;
    margin-top: 21px;
    padding-left: 41px;
}
.wiki-search {
    display: flex;
    gap: 9px;
    font-size: 18px;
}
.wiki-search input {
    width: 248px;
    height: 29px;
    padding: 0 4px;
    border: 2px solid #8f8f8f;
    border-radius: 3px;
    background-color: #fff;
}
.wiki-search button {
    height: 29px;
    padding: 0 14px;
    color: #b3aea8;
    background-color: #f0edea;
    border: 2px solid #c8c3bd;
    border-radius: 3px;
}
.page-icons {
    display: flex;
    gap: 10px;
    margin-left: 20px;
}
.page-icons a {
    display: flex;
    align-items: flex-end;
    height: 30px;
    padding-bottom: 3px;
}
.pointer {
    position: absolute;
    top: 583px;
    left: 1231px;
}
.scrollbar {
    display: flex;
    flex-direction: column;
    width: 21px;
    background-color: #d5cbc8;
    border-left: 2px solid #a49f99;
}
.scroll-arrow {
    display: flex;
    align-items: center;
    justify-content: center;
    height: 20px;
    background-color: #f3f1ee;
    border: 1px solid #aaa49d;
}
.scroll-end {
    margin-top: auto;
}
.scroll-thumb {
    display: flex;
    align-items: center;
    justify-content: center;
    height: 70%;
    background: linear-gradient(to right, #f8f6f4, #e6e1dc);
    border: 1px solid #aaa49d;
}

/* bottom bars */
.statusbar {
    display: flex;
    align-items: center;
    justify-content: space-between;
    height: 34px;
    padding: 0 10px 3px 12px;
    border-top: 2px solid #b9b5b1;
    border-bottom: 1px solid #b9b5b1;
}
.tweets {
    display: flex;
    align-items: center;
    gap: 4px;
}
.taskbar {
    display: flex;
    align-items: center;
    gap: 6px;
    height: 34px;
    padding: 0 3px 0 2px;
}
.show-desktop,
.tasks button {
    display: flex;
    align-items: center;
    height: 30px;
    background: linear-gradient(#f7f5f3, #ebe7e3);
    border: 2px solid #b3aea8;
    border-radius: 3px;
}
.show-desktop {
    justify-content: center;
    width: 31px;
}
.tasks {
    flex: 1;
    display: flex;
    gap: 3px;
}
.tasks button {
    flex: 1 1 0;
    gap: 10px;
    padding-left: 8px;
    white-space: nowrap;
}
.tasks .active {
    background: #d6d0c9;
    border-color: #9b958e;
}
.minimized svg {
    opacity: 0.5;
}
.pager {
    display: flex;
    gap: 1px;
    height: 30px;
    background-color: #b0a69d;
    border: 1px solid #a0968d;
}
.pager span {
    display: flex;
    align-items: center;
    justify-content: center;
    width: 46px;
    background-color: #efebe7;
    border: 2px solid #222;
}
.pager .empty {
    background: none;
    border: none;
}
.pager .current {
    background-color: #fdf0dc;
    border-top-color: #c98a3c;
}
```
